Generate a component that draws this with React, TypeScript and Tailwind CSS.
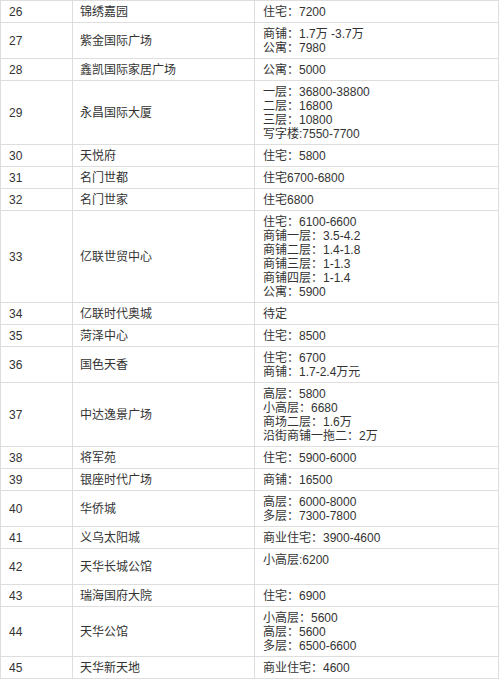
interface Row {
  no: number
  name: string
  price: string[]
}

const rows: Row[] = [
  { no: 26, name: "锦绣嘉园", price: ["住宅：7200"] },
  { no: 27, name: "紫金国际广场", price: ["商铺：1.7万 -3.7万", "公寓：7980"] },
  { no: 28, name: "鑫凯国际家居广场", price: ["公寓：5000"] },
  { no: 29, name: "永昌国际大厦", price: ["一层：36800-38800", "二层：16800", "三层：10800", "写字楼:7550-7700"] },
  { no: 30, name: "天悦府", price: ["住宅：5800"] },
  { no: 31, name: "名门世都", price: ["住宅6700-6800"] },
  { no: 32, name: "名门世家", price: ["住宅6800"] },
  {
    no: 33,
    name: "亿联世贸中心",
    price: ["住宅：6100-6600", "商铺一层：3.5-4.2", "商铺二层：1.4-1.8", "商铺三层：1-1.3", "商铺四层：1-1.4", "公寓：5900"]
  },
  { no: 34, name: "亿联时代奥城", price: ["待定"] },
  { no: 35, name: "菏泽中心", price: ["住宅：8500"] },
  { no: 36, name: "国色天香", price: ["住宅：6700", "商铺：1.7-2.4万元"] },
  { no: 37, name: "中达逸景广场", price: ["高层：5800", "小高层：6680", "商场二层：1.6万", "沿街商铺一拖二：2万"] },
  { no: 38, name: "将军苑", price: ["住宅：5900-6000"] },
  { no: 39, name: "银座时代广场", price: ["商铺：16500"] },
  { no: 40, name: "华侨城", price: ["高层：6000-8000", "多层：7300-7800"] },
  { no: 41, name: "义乌太阳城", price: ["商业住宅：3900-4600"] },
  { no: 42, name: "天华长城公馆", price: ["小高层:6200", "\u00a0"] },
  { no: 43, name: "瑞海国府大院", price: ["住宅：6900"] },
  { no: 44, name: "天华公馆", price: ["小高层：5600", "高层：5600", "多层：6500-6600"] },
  { no: 45, name: "天华新天地", price: ["商业住宅：4600"] }
]

export default function App() {
  return (
    <div
      className="w-[500px] h-[679px] overflow-hidden bg-white text-[#333] text-[12px] leading-[14px]"
      style={{ fontFamily: '"Liberation Sans", "Noto Sans CJK SC", sans-serif' }}
    >
      <table className="w-[499px] border-collapse table-fixed">
        <colgroup>
          <col className="w-[72px]" />
          <col className="w-[182px]" />
          <col />
        </colgroup>
        <tbody>
          {rows.map((r) => (
            <tr key={r.no}>
              <td className="border border-[#dedede] px-[8px] pt-[4px] pb-[3px] align-middle">
                <div className="h-[14px] whitespace-nowrap">{r.no}</div>
              </td>
              <td className="border border-[#dedede] px-[7px] pt-[4px] pb-[3px] align-middle">
                <div className="h-[14px] whitespace-nowrap">{r.name}</div>
              </td>
              <td className="border border-[#dedede] px-[8px] pt-[4px] pb-[3px] align-middle">
                {r.price.map((p, i) => (
                  <div key={i} className="h-[14px] whitespace-nowrap">
                    {p}
                  </div>
                ))}
              </td>
            </tr>
          ))}
        </tbody>
      </table>
    </div>
  )
}
